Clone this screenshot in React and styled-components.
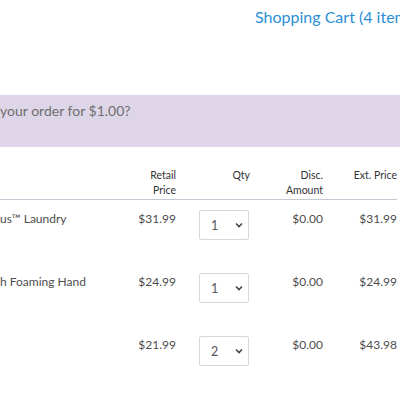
import React from 'react'
import styled, { createGlobalStyle } from 'styled-components'

const Global = createGlobalStyle`
body {
  margin: 0;
  overflow: hidden;
  background: #fff;
  font-family: Lato, "Liberation Sans", sans-serif;
}
`

const Page = styled.div`
width: 400px;
height: 400px;
overflow: hidden;
`

const TopBar = styled.div`
display: flex;
justify-content: flex-start;
padding: 7px 0 0 255px;
height: 88px;
box-sizing: border-box;
`

const CartLink = styled.a`
color: #2b8fd6;
font-size: 16px;
line-height: 20px;
white-space: nowrap;
text-decoration: none;
`

const Banner = styled.div`
background: #ded6e8;
height: 52px;
box-sizing: border-box;
margin-top: 7px;
padding-top: 6px;
color: #6e6e6e;
font-size: 14px;
line-height: 20px;
white-space: nowrap;
`

const Table = styled.div`
display: grid;
grid-template-columns: 116px 60px 74px 73px 74px;
margin-top: 21px;
`

const Head = styled.div`
font-size: 10.5px;
line-height: 15px;
color: #333;
text-align: ${p => p.align || 'right'};
padding-bottom: 1px;
border-bottom: 1px solid #c3cad3;
`

const Cell = styled.div`
font-size: 12px;
line-height: 18px;
color: #4d4d4d;
text-align: ${p => p.align || 'right'};
padding-top: 10px;
height: 63px;
box-sizing: border-box;
white-space: nowrap;
overflow: hidden;
`

const QtyCell = styled.div`
display: flex;
justify-content: flex-end;
padding: 10px 1px 0 0;
height: 63px;
box-sizing: border-box;
`

const Select = styled.div`
width: 50px;
height: 30px;
box-sizing: border-box;
border: 1px solid #d8d8d8;
border-radius: 2px;
display: flex;
align-items: center;
justify-content: space-between;
padding: 0 5px 0 11px;
font-size: 12.5px;
color: #555;
`

const Chevron = () => (
  <svg width="8" height="6" viewBox="0 0 8 6">
    <path d="M1 1.5 L4 4.5 L7 1.5" fill="none" stroke="#444" strokeWidth="1.6" />
  </svg>
)

const rows = [
  { name: 'us\u2122 Laundry', price: '$31.99', qty: 1, disc: '$0.00', ext: '$31.99' },
  { name: 'h Foaming Hand', price: '$24.99', qty: 1, disc: '$0.00', ext: '$24.99' },
  { name: '', price: '$21.99', qty: 2, disc: '$0.00', ext: '$43.98' },
]

const App = () => {
  return (
    <Page>
      <Global />
      <TopBar>
        <CartLink href="#">Shopping Cart (4 items)</CartLink>
      </TopBar>
      <Banner>your order for $1.00?</Banner>
      <Table>
        <Head align="left"></Head>
        <Head>Retail<br />Price</Head>
        <Head>Qty</Head>
        <Head>Disc.<br />Amount</Head>
        <Head>Ext. Price</Head>
        {rows.map((r, i) => (
          <React.Fragment key={i}>
            <Cell align="left">{r.name}</Cell>
            <Cell>{r.price}</Cell>
            <QtyCell>
              <Select>
                <span>{r.qty}</span>
                <Chevron />
              </Select>
            </QtyCell>
            <Cell>{r.disc}</Cell>
            <Cell>{r.ext}</Cell>
          </React.Fragment>
        ))}
      </Table>
    </Page>
  )
}

export default App
